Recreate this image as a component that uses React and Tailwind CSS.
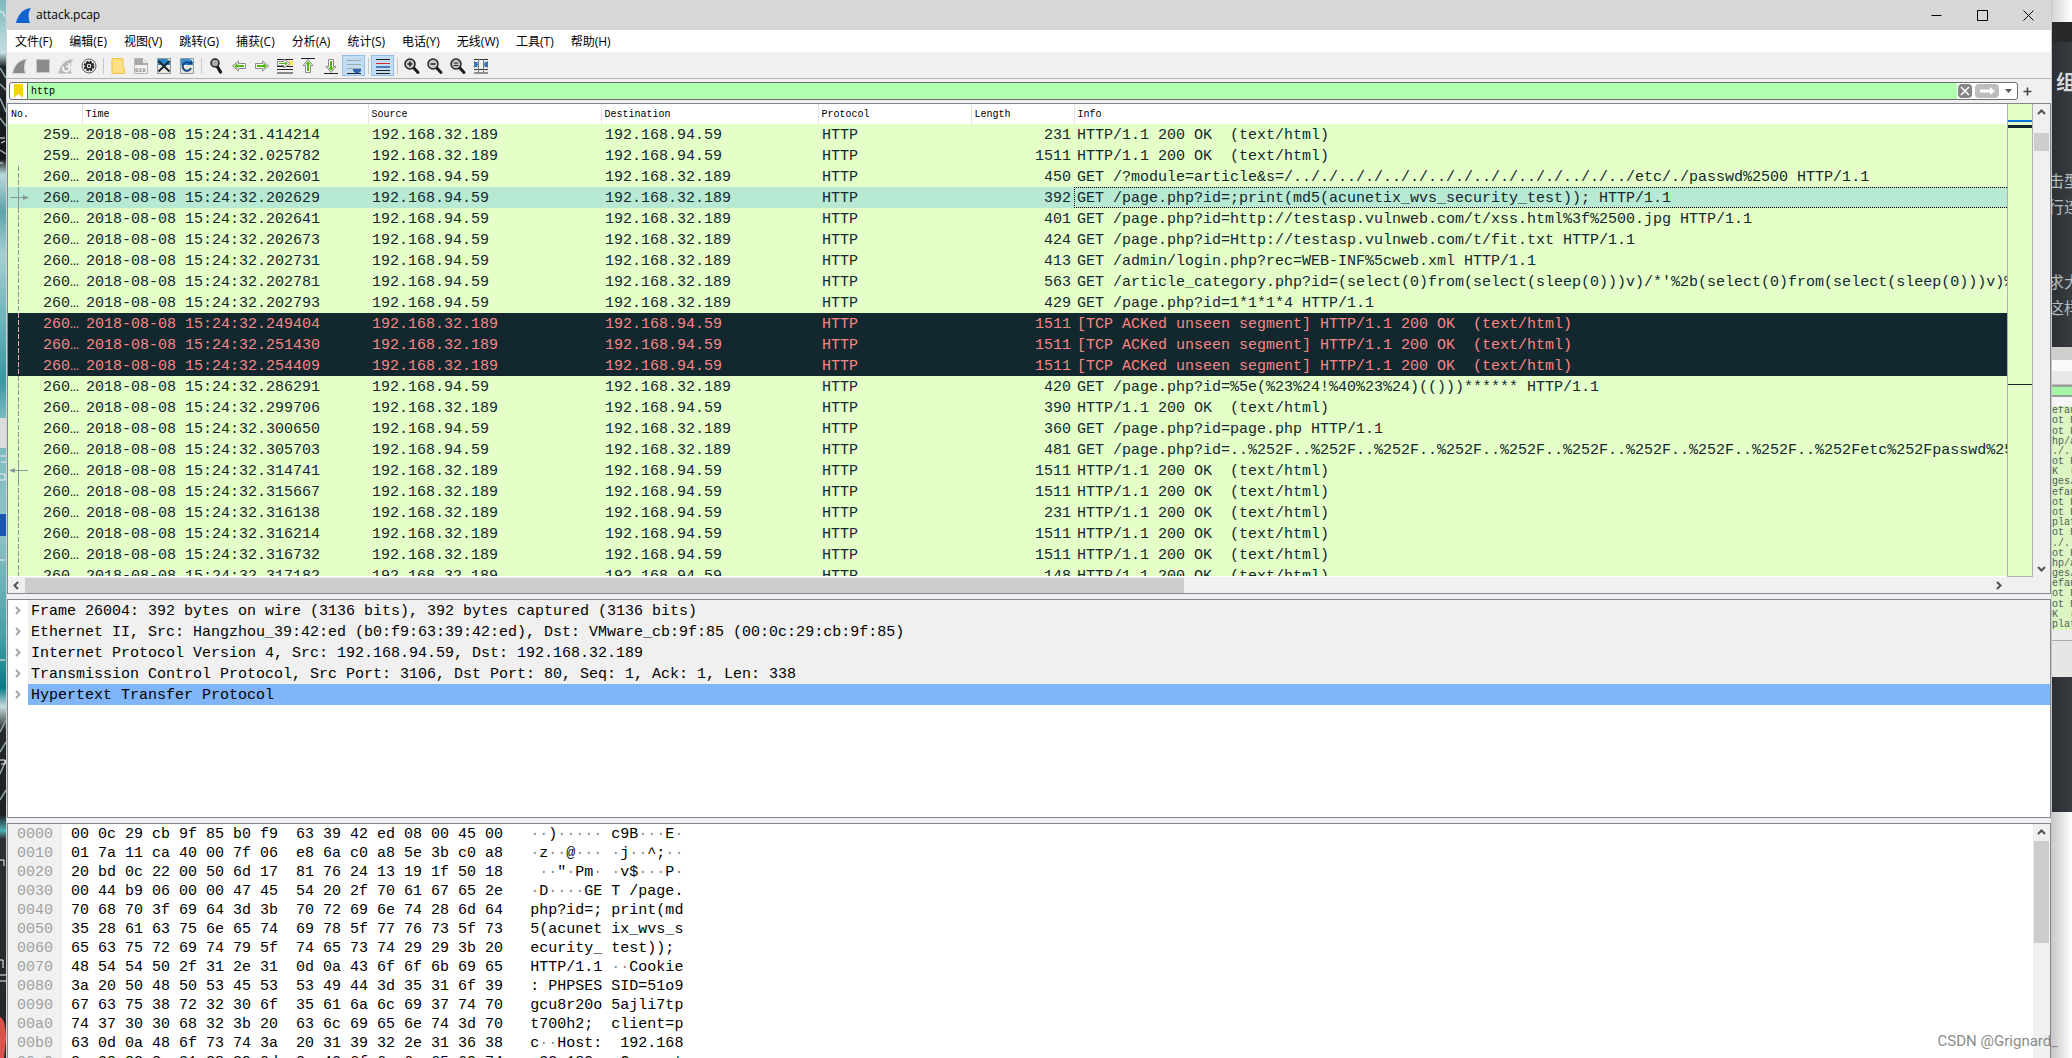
import React from 'react';

const menus = ['文件(F)', '编辑(E)', '视图(V)', '跳转(G)', '捕获(C)', '分析(A)', '统计(S)', '电话(Y)', '无线(W)', '工具(T)', '帮助(H)'];

const OK = 'HTTP/1.1 200 OK  (text/html)';
const UNSEEN = '[TCP ACKed unseen segment] HTTP/1.1 200 OK  (text/html)';
const A = '192.168.94.59';
const B = '192.168.32.189';

// no, time, source, destination, length, info, mark
const packets = [
    ['259…', '31.414214', B, A, 231, OK, null],
    ['259…', '32.025782', B, A, 1511, OK, null],
    ['260…', '32.202601', A, B, 450, 'GET /?module=article&s=/.././.././.././.././.././.././.././../etc/./passwd%2500 HTTP/1.1', 'dash'],
    ['260…', '32.202629', A, B, 392, 'GET /page.php?id=;print(md5(acunetix_wvs_security_test)); HTTP/1.1', 'request'],
    ['260…', '32.202641', A, B, 401, 'GET /page.php?id=http://testasp.vulnweb.com/t/xss.html%3f%2500.jpg HTTP/1.1', 'dash'],
    ['260…', '32.202673', A, B, 424, 'GET /page.php?id=Http://testasp.vulnweb.com/t/fit.txt HTTP/1.1', 'dash'],
    ['260…', '32.202731', A, B, 413, 'GET /admin/login.php?rec=WEB-INF%5cweb.xml HTTP/1.1', 'dash'],
    ['260…', '32.202781', A, B, 563, "GET /article_category.php?id=(select(0)from(select(sleep(0)))v)/*'%2b(select(0)from(select(sleep(0)))v)%", 'dash'],
    ['260…', '32.202793', A, B, 429, 'GET /page.php?id=1*1*1*4 HTTP/1.1', 'dash'],
    ['260…', '32.249404', B, A, 1511, UNSEEN, 'bad'],
    ['260…', '32.251430', B, A, 1511, UNSEEN, 'bad'],
    ['260…', '32.254409', B, A, 1511, UNSEEN, 'bad'],
    ['260…', '32.286291', A, B, 420, 'GET /page.php?id=%5e(%23%24!%40%23%24)(()))****** HTTP/1.1', 'dash'],
    ['260…', '32.299706', B, A, 390, OK, 'dash'],
    ['260…', '32.300650', A, B, 360, 'GET /page.php?id=page.php HTTP/1.1', 'dash'],
    ['260…', '32.305703', A, B, 481, 'GET /page.php?id=..%252F..%252F..%252F..%252F..%252F..%252F..%252F..%252F..%252F..%252Fetc%252Fpasswd%25', 'dash'],
    ['260…', '32.314741', B, A, 1511, OK, 'response'],
    ['260…', '32.315667', B, A, 1511, OK, 'dash'],
    ['260…', '32.316138', B, A, 231, OK, 'dash'],
    ['260…', '32.316214', B, A, 1511, OK, 'dash'],
    ['260…', '32.316732', B, A, 1511, OK, 'dash'],
    ['260…', '32.317182', B, A, 148, OK, 'dash'],
];

const details = [
    'Frame 26004: 392 bytes on wire (3136 bits), 392 bytes captured (3136 bits)',
    'Ethernet II, Src: Hangzhou_39:42:ed (b0:f9:63:39:42:ed), Dst: VMware_cb:9f:85 (00:0c:29:cb:9f:85)',
    'Internet Protocol Version 4, Src: 192.168.94.59, Dst: 192.168.32.189',
    'Transmission Control Protocol, Src Port: 3106, Dst Port: 80, Seq: 1, Ack: 1, Len: 338',
    'Hypertext Transfer Protocol',
];

const dump = [
    '00 0c 29 cb 9f 85 b0 f9 63 39 42 ed 08 00 45 00',
    '01 7a 11 ca 40 00 7f 06 e8 6a c0 a8 5e 3b c0 a8',
    '20 bd 0c 22 00 50 6d 17 81 76 24 13 19 1f 50 18',
    '00 44 b9 06 00 00 47 45 54 20 2f 70 61 67 65 2e',
    '70 68 70 3f 69 64 3d 3b 70 72 69 6e 74 28 6d 64',
    '35 28 61 63 75 6e 65 74 69 78 5f 77 76 73 5f 73',
    '65 63 75 72 69 74 79 5f 74 65 73 74 29 29 3b 20',
    '48 54 54 50 2f 31 2e 31 0d 0a 43 6f 6f 6b 69 65',
    '3a 20 50 48 50 53 45 53 53 49 44 3d 35 31 6f 39',
    '67 63 75 38 72 32 30 6f 35 61 6a 6c 69 37 74 70',
    '74 37 30 30 68 32 3b 20 63 6c 69 65 6e 74 3d 70',
    '63 0d 0a 48 6f 73 74 3a 20 31 39 32 2e 31 36 38',
    '2e 33 32 2e 31 38 39 0d 0a 43 6f 6e 6e 65 63 74',
];

const behind = ['efau', 'ot F', 'ot F', 'hp/a', './..', 'ot F', 'K  (', 'ges/', 'efau', 'ot F', 'ot F', 'plat', 'ot F', './..', 'ot F', 'hp/a', 'ges/', 'efau', 'ot F', 'ot F', 'K  (', 'plat'];

const Fin = ({ color }) => (
    <svg width="17" height="17" viewBox="0 0 17 17">
        <path d="M1 16C3 8 7 2 16 1C13 5 13 11 15 16Z" fill={color} />
    </svg>
);

const Arrow = ({ rotate = 0 }) => (
    <g transform={`rotate(${rotate} 9 9)`}>
        <path d="M2.500 6.500H9.500V4L15.500 9L9.500 14V11.500H2.500Z" fill="#fff" stroke="#8a8a8a" />
        <path d="M4 8H10.500V6L14 9L10.500 12V10H4Z" fill="#55b512" />
    </g>
);

const Lens = ({ children }) => (
    <>
        <path d="M10 10L15 15.500" stroke="#1c1c1c" strokeWidth="3" strokeLinecap="round" />
        <circle cx="7" cy="7" r="5" fill="#c9c9c9" stroke="#222" strokeWidth="1.500" />
        {children}
    </>
);

const tools = [
    { name: 'Start', art: <path d="M1.500 16.500C3 9 7 3 16 2C13 6 13 12 14.500 16.500Z" fill="#8a8a8a" stroke="#d5d5d5" /> },
    { name: 'Stop', art: <path d="M2.500 2.500h13v13h-13z" fill="#8c8c8c" stroke="#c8c8c8" /> },
    {
        name: 'Restart',
        art: (
            <>
                <path d="M1.500 16.500C3 9 7 3 16 2C13 6 13 12 14.500 16.500Z" fill="#b5b5b5" stroke="#d5d5d5" />
                <path d="M6.500 9.500A3.200 3.200 0 1 0 11.500 9M12 6V9.500H9" fill="none" stroke="#f7f7f7" strokeWidth="1.700" />
            </>
        ),
    },
    {
        name: 'Options',
        art: (
            <>
                <circle cx="9" cy="9" r="7" fill="#f4f4f4" stroke="#555" />
                <circle cx="9" cy="9" r="4.200" fill="none" stroke="#2b2b2b" strokeWidth="2.400" strokeDasharray="2.200 1.100" />
                <circle cx="9" cy="9" r="3.200" fill="none" stroke="#2b2b2b" strokeWidth="1.800" />
                <circle cx="9" cy="9" r="1.200" fill="#333" />
            </>
        ),
    },
    null,
    { name: 'Open', art: <path d="M3 1.500H14V11H15.500V16.500H3Z" fill="#ffdf82" stroke="#efc14b" /> },
    {
        name: 'Save',
        art: (
            <>
                <path d="M2.500 1.500H11L15.500 6V16.500H2.500Z" fill="#f5f5f5" stroke="#b4b4b4" />
                <path d="M3 2H11V6H15V8H3Z" fill="#a8a8a8" />
                <path d="M11 2V6H15" fill="#eee" />
                <text x="3" y="15" fontSize="6" fontFamily="Liberation Mono" fontWeight="bold" fill="#888">010</text>
            </>
        ),
    },
    {
        name: 'Close',
        art: (
            <>
                <path d="M2.500 1.500H15.500V16.500H2.500Z" fill="#e9e7d9" stroke="#8b9aa5" />
                <path d="M3 2H12L15 5V8H3Z" fill="#2a87c8" />
                <path d="M3.500 4L14.500 14.500M14.500 4L3.500 14.500" stroke="#16262f" strokeWidth="2" />
            </>
        ),
    },
    {
        name: 'Reload',
        art: (
            <>
                <path d="M2.500 1.500H15.500V16.500H2.500Z" fill="#e9e7d9" stroke="#8b9aa5" />
                <path d="M3 2H12L15 5V8H3Z" fill="#3191d0" />
                <path d="M12.500 7A4.300 4.300 0 1 0 13 11" fill="none" stroke="#15468c" strokeWidth="2" />
                <path d="M9 7.500H14V3Z" fill="#15468c" />
            </>
        ),
    },
    null,
    {
        name: 'Find',
        art: (
            <>
                <path d="M10 9L13.500 15" stroke="#151515" strokeWidth="3.200" strokeLinecap="round" />
                <circle cx="8" cy="6" r="4" fill="#aaa" stroke="#222" strokeWidth="1.500" />
            </>
        ),
    },
    { name: 'Back', art: <Arrow rotate={180} /> },
    { name: 'Forward', art: <Arrow /> },
    {
        name: 'Go to packet',
        art: (
            <>
                <path d="M1 2.500H17M1 9.500H17M1 12.500H17M1 16H17" stroke="#222" />
                <path d="M13 4H17V8H13Z" fill="#fbe94e" />
                <path d="M1.500 4.500H8V2L14 6.500L8 11V8.500H1.500Z" fill="#fff" stroke="#8a8a8a" />
                <path d="M3 6H9V4.500L12 6.500L9 8.500V7H3Z" fill="#55b512" />
            </>
        ),
    },
    { name: 'First packet', art: <><path d="M2 1.500H16" stroke="#222" /><Arrow rotate={-90} /></> },
    { name: 'Last packet', art: <><path d="M2 16.500H16" stroke="#222" /><Arrow rotate={90} /></> },
    {
        name: 'Auto scroll',
        active: true,
        art: (
            <>
                <path d="M2 3.500H16M2 7.500H16M2 11.500H16" stroke="#a0a8ae" />
                <path d="M2 16.500H16" stroke="#222" />
                <path d="M8 12H16V14L13 16.500H11L8 14Z" fill="#2d62b3" />
            </>
        ),
    },
    null,
    {
        name: 'Colorize',
        active: true,
        art: (
            <>
                <path d="M2 2.500H16M2 13.500H16M2 16.500H16" stroke="#222" />
                <path d="M2 6.500H16" stroke="#d8282f" />
                <path d="M2 10H16" stroke="#2a5cad" strokeWidth="1.500" />
            </>
        ),
    },
    null,
    { name: 'Zoom in', art: <Lens><path d="M4.500 7H9.500M7 4.500V9.500" stroke="#222" strokeWidth="1.500" /></Lens> },
    { name: 'Zoom out', art: <Lens><path d="M4.500 7H9.500" stroke="#222" strokeWidth="1.500" /></Lens> },
    { name: 'Normal size', art: <Lens><path d="M4.500 6H9.500M4.500 8.500H9.500" stroke="#222" /></Lens> },
    {
        name: 'Resize columns',
        art: (
            <>
                <path d="M2 2.500H16M2 12.500H16M2 16H16" stroke="#333" />
                <path d="M6.500 2V16M11.500 2V16" stroke="#777" />
                <path d="M2 4V11L6 7.500ZM16 4V11L12 7.500Z" fill="#1d5ca8" />
                <path d="M2 5H5.500V10H2ZM12.500 5H16V10H12.500Z" fill="#3a73b5" />
            </>
        ),
    },
];

const Chevron = ({ rotate = 0, color = '#505050' }) => (
    <svg width="9" height="9" viewBox="0 0 9 9">
        <path d="M1 6L4.500 2.500L8 6" fill="none" stroke={color} strokeWidth="2" transform={`rotate(${rotate} 4.500 4.500)`} />
    </svg>
);

// Conversation line drawn in front of the packet number
const Track = ({ mark }) => {
    const color = mark === 'bad' ? '#f4a6a6' : '#8a979c';
    const solid = mark === 'request' || mark === 'response';
    return (
        <svg width="24" height="21" viewBox="0 0 24 21" className="shrink-0">
            {mark && <path d="M10.500 0V21" stroke={color} strokeDasharray={solid ? undefined : '5 2'} />}
            {mark === 'request' && <path d="M2 10.500H15" stroke={color} />}
            {mark === 'request' && <path d="M15 8L21 10.500L15 13Z" fill={color} />}
            {mark === 'response' && <path d="M7 10.500H20" stroke={color} />}
            {mark === 'response' && <path d="M7 8L1 10.500L7 13Z" fill={color} />}
        </svg>
    );
};

const Desktop = () => (
    <svg className="h-full w-[6px] shrink-0" viewBox="0 0 6 1058" preserveAspectRatio="none">
        <defs>
            <linearGradient id="sea" x1="0" y1="0" x2="0" y2="1">
                <stop offset="0" stopColor="#7fb9bd" />
                <stop offset="0.050" stopColor="#c3dfe0" />
                <stop offset="0.063" stopColor="#20272b" />
                <stop offset="0.150" stopColor="#15191d" />
                <stop offset="0.165" stopColor="#b9d9db" />
                <stop offset="0.200" stopColor="#5da3ab" />
                <stop offset="0.240" stopColor="#a5cfd2" />
                <stop offset="0.300" stopColor="#6fb5bd" />
                <stop offset="0.360" stopColor="#3a97a3" />
                <stop offset="0.394" stopColor="#77b9c0" />
                <stop offset="0.500" stopColor="#8ec3c7" />
                <stop offset="0.600" stopColor="#4aa0a8" />
                <stop offset="0.650" stopColor="#087a85" />
                <stop offset="0.668" stopColor="#c5dcdc" />
                <stop offset="0.690" stopColor="#24292c" />
                <stop offset="0.770" stopColor="#1d2022" />
                <stop offset="0.785" stopColor="#4bb0b5" />
                <stop offset="0.793" stopColor="#2c3032" />
                <stop offset="1" stopColor="#232629" />
            </linearGradient>
        </defs>
        <path d="M0 0H6V1058H0Z" fill="url(#sea)" />
        <path d="M0 68L6 78M0 84L6 90M0 98L6 112M0 118L6 126M0 150L6 154" stroke="#93a7ab" strokeWidth="1.500" />
        <path d="M0 732L6 720M0 752L6 742M0 774L6 760M0 800L6 790" stroke="#8fa3a5" strokeWidth="1.500" />
        <path d="M0 418H6V448H0Z" fill="#dcdcdc" />
        <path d="M0 514H6V536H0Z" fill="#1d56b0" />
        <path d="M0 1017Q6 1020 6 1040L4 1058H0Z" fill="#d9534a" />
        <path d="M0 12L3 12L5 17M0 138H5M1 143L5 141M0 163H3M0 456H6M1 462H6M0 474H5V480H0M0 560H5M0 660H5M0 760H5V764H1M0 860H4V866M0 960H3V968M0 975H6M0 981H6" fill="none" stroke="#f4f4f4" />
    </svg>
);

const Backdrop = () => (
    <div className="flex w-5 shrink-0 flex-col overflow-hidden bg-white text-[#b6bcc0]">
        <div className="h-[22px] shrink-0 bg-linear-to-r from-[#d5d5d5] to-white" />
        <div className="h-5 shrink-0 bg-[#27292b]" />
        <div className="flex h-[305px] shrink-0 flex-col items-end overflow-hidden whitespace-nowrap bg-linear-to-r from-[#2c3034] to-[#373c40] pt-6">
            <p className="h-8 w-4 text-xl font-bold leading-8 text-[#d8dadb]">组</p>
            <p className="mt-[69px] h-[26px] w-6 text-base leading-[26px]">击型</p>
            <p className="h-[26px] w-6 text-base leading-[26px]">行连</p>
            <p className="mt-[49px] h-[26px] w-6 text-base leading-[26px]">求大</p>
            <p className="h-[26px] w-6 text-base leading-[26px]">这样</p>
        </div>
        <div className="h-[13px] shrink-0 bg-[#cfcfcf]" />
        <div className="h-[11px] shrink-0 bg-[#fafafa]" />
        <div className="h-[14px] shrink-0 border-b border-[#bbb] bg-[#e8e8e8]" />
        <div className="h-[12px] shrink-0 border-y-2 border-[#9aa09a] bg-[#a5f7a5]" />
        <div className="h-[9px] shrink-0 bg-[#f6f6f6]" />
        <div className="grid h-[224px] shrink-0 auto-rows-fr items-end overflow-hidden whitespace-pre bg-[#dcf5c3] font-['Liberation_Mono'] text-[10px] leading-[10px] text-[#4e5f58]">
            {behind.map((line, i) => (
                <span key={i}>{line}</span>
            ))}
        </div>
        <div className="h-[11px] shrink-0 border-b border-[#aaa] bg-[#ececec]" />
        <div className="h-9 shrink-0 bg-[#e6e6e6]" />
        <div className="h-[135px] shrink-0 bg-linear-to-r from-[#2c3034] to-[#373c40]" />
        <div className="flex-1 bg-linear-to-r from-[#c9c9c9] to-white" />
    </div>
);

const TitleBar = () => (
    <header className="flex h-[30px] shrink-0 items-center bg-[#d7d7d7] pl-[9px]">
        <Fin color="#1263d2" />
        <h1 className="ml-1 flex-1 font-['Open_Sans'] text-[12px] leading-4">attack.pcap</h1>
        {['M0.500 5.500H10.500', 'M0.500 0.500H10.500V10.500H0.500Z', 'M0.500 0.500L10.500 10.500M10.500 0.500L0.500 10.500'].map((d, i) => (
            <button key={d} aria-label={['Minimize', 'Maximize', 'Close'][i]} className="flex h-[28px] w-[46px] items-center justify-center">
                <svg width="11" height="11" viewBox="0 0 11 11">
                    <path d={d} fill="none" stroke="#000" />
                </svg>
            </button>
        ))}
    </header>
);

const FilterBar = () => (
    <div className="flex h-[24px] shrink-0 items-center gap-1 bg-[#f0f0f0] pl-[2px] pr-[18px]">
        <div className="flex h-[18px] flex-1 items-stretch overflow-hidden rounded-[3px] border border-[#6e6e6e] bg-white">
            <button aria-label="Bookmark" className="flex w-[18px] items-center justify-center border-r border-[#6e6e6e]">
                <svg width="9" height="14" viewBox="0 0 9 14">
                    <path d="M0 0H9V14L4.500 10L0 14Z" fill="#f2d500" />
                </svg>
            </button>
            <input aria-label="Display filter" defaultValue="http" className="min-w-0 flex-1 bg-[#afffaf] px-[3px] font-['Liberation_Mono'] text-[10px] text-black outline-none" />
            <button aria-label="Clear" className="m-px flex w-[14px] items-center justify-center rounded-sm bg-[#858585]">
                <svg width="10" height="10" viewBox="0 0 10 10">
                    <path d="M1 1L9 9M9 1L1 9" stroke="#fff" strokeWidth="1.500" />
                </svg>
            </button>
            <button aria-label="Apply" className="m-px ml-[2px] flex w-6 items-center justify-center rounded-sm bg-[#bdbdbd]">
                <svg width="17" height="8" viewBox="0 0 17 8">
                    <path d="M1 2.500H11V0L16 4L11 8V5.500H1Z" fill="#fff" />
                </svg>
            </button>
            <button aria-label="Recent filters" className="flex w-[17px] items-center justify-center">
                <svg width="7" height="4" viewBox="0 0 7 4">
                    <path d="M0 0H7L3.500 4Z" fill="#555" />
                </svg>
            </button>
        </div>
        <button aria-label="Add filter button" className="flex w-[11px] shrink-0 justify-center">
            <svg width="9" height="9" viewBox="0 0 9 9">
                <path d="M0.500 4.500H8.500M4.500 0.500V8.500" stroke="#444" strokeWidth="1.600" />
            </svg>
        </button>
    </div>
);

const PacketRow = ({ packet }) => {
    const [no, time, source, destination, length, info, mark] = packet;
    let tone = 'bg-[#e4ffc7] text-[#12272e]';
    if (mark === 'bad') tone = 'bg-[#12272e] text-[#f78787]';
    if (mark === 'request') tone = 'bg-[#b7e9d3] text-[#12272e]';
    return (
        <tr className={`h-[21px] ${tone}`}>
            <td className="p-0">
                <div className="flex h-[21px] justify-between pr-[3px]">
                    <Track mark={mark} />
                    <span className="pt-[2px]">{no}</span>
                </div>
            </td>
            <td className="pb-0 pl-1 pt-[2px]">2018-08-08 15:24:{time}</td>
            <td className="pb-0 pl-1 pt-[2px]">{source}</td>
            <td className="pb-0 pl-1 pt-[2px]">{destination}</td>
            <td className="pb-0 pl-1 pt-[2px]">HTTP</td>
            <td className="pb-0 pr-[3px] pt-[2px] text-right">{length}</td>
            <td className="overflow-hidden p-0">
                <div className={mark === 'request' ? 'h-[21px] border border-r-0 border-dotted border-black pl-[2px] pt-px' : 'h-[21px] pl-[3px] pt-[2px]'}>{info}</div>
            </td>
        </tr>
    );
};

const PacketList = () => (
    <section className="flex min-h-0 flex-col overflow-hidden border border-[#828790] bg-[#f0f0f0]">
        <div className="flex min-h-0 flex-1">
            <div className="min-w-0 flex-1 overflow-hidden border-b border-white bg-white">
                <table className="w-full table-fixed border-collapse whitespace-pre text-[15px] leading-[19px]">
                    <colgroup>
                        <col className="w-[74px]" />
                        <col className="w-[286px]" />
                        <col className="w-[233px]" />
                        <col className="w-[217px]" />
                        <col className="w-[153px]" />
                        <col className="w-[103px]" />
                        <col />
                    </colgroup>
                    <thead>
                        <tr className="h-5 bg-white text-left text-[10px] leading-[18px] text-black">
                            {['No.', 'Time', 'Source', 'Destination', 'Protocol', 'Length', 'Info'].map((name) => (
                                <th key={name} scope="col" className="border-r border-[#e2e2e2] pb-0 pl-[3px] pt-[2px] font-normal last:border-r-0">{name}</th>
                            ))}
                        </tr>
                    </thead>
                    <tbody>
                        {packets.map((packet, i) => (
                            <PacketRow key={i} packet={packet} />
                        ))}
                    </tbody>
                </table>
            </div>
            {/* Intelligent scroll bar */}
            <div className="flex w-[26px] shrink-0 flex-col border border-t-0 border-[#b0b0b0] bg-[#e4ffc7] pt-4">
                <div className="h-[2px] shrink-0 bg-[#0078d7]" />
                <div className="mt-[3px] h-[3px] shrink-0 bg-[#12272e]" />
                <div className="mt-[256px] h-px shrink-0 bg-[#12272e]" />
            </div>
            <div className="flex w-[17px] shrink-0 flex-col items-center justify-between pb-1 pt-1">
                <div className="flex w-full flex-col items-center gap-4">
                    <Chevron />
                    <div className="h-[18px] w-[15px] bg-[#cdcdcd]" />
                </div>
                <Chevron rotate={180} />
            </div>
        </div>
        <div className="flex h-4 shrink-0 items-center pr-[43px]">
            <span className="flex w-[17px] justify-center"><Chevron rotate={-90} /></span>
            <div className="flex h-[15px] flex-1">
                <div className="w-[59%] bg-[#cdcdcd]" />
            </div>
            <span className="flex w-[17px] justify-center"><Chevron rotate={90} /></span>
        </div>
    </section>
);

const PacketDetails = () => (
    <section className="min-h-0 overflow-hidden border border-[#828790] bg-white">
        <ul className="text-[15px] leading-[19px] text-black">
            {details.map((line, i) => (
                <li key={line} className="flex h-[21px]">
                    <button aria-label="Expand" className="flex w-5 shrink-0 items-center justify-center pr-[2px]">
                        <Chevron rotate={90} color="#a6a6a6" />
                    </button>
                    <span className={`flex-1 whitespace-pre pl-[3px] pt-[2px] ${i === 4 ? 'bg-[#80b5f7]' : 'bg-[#f0f0f0]'}`}>{line}</span>
                </li>
            ))}
        </ul>
    </section>
);

const toAscii = (bytes) =>
    bytes.map((byte, i) => {
        const code = parseInt(byte, 16);
        const printable = code >= 32 && code < 127;
        return (
            <React.Fragment key={i}>
                {i === 8 && ' '}
                {printable ? String.fromCharCode(code) : <span className="text-[#8c8c8c]">·</span>}
            </React.Fragment>
        );
    });

const PacketBytes = () => (
    <section className="flex min-h-0 overflow-hidden border border-b-0 border-[#828790] bg-white">
        <div className="min-w-0 flex-1 overflow-hidden">
            <table className="whitespace-pre text-[15px] leading-[17px] text-black">
                <tbody>
                    {dump.map((line, i) => {
                        const bytes = line.split(' ');
                        return (
                            <tr key={i} className="h-[19px]">
                                <th scope="row" className="w-[54px] bg-[#f0f0f0] px-[9px] pb-0 pt-[2px] text-left font-normal text-[#a0a0a0]">
                                    {(i * 16).toString(16).padStart(4, '0')}
                                </th>
                                <td className="pb-0 pl-[9px] pt-[2px]">{bytes.slice(0, 8).join(' ')}  {bytes.slice(8).join(' ')}</td>
                                <td className="pb-0 pl-[27px] pt-[2px]">{toAscii(bytes)}</td>
                            </tr>
                        );
                    })}
                </tbody>
            </table>
        </div>
        <div className="flex w-[17px] shrink-0 flex-col items-center gap-1 bg-[#f0f0f0] pt-1">
            <Chevron />
            <div className="h-[102px] w-[15px] bg-[#cdcdcd]" />
        </div>
    </section>
);

const App = () => (
    <div className="relative flex h-screen overflow-hidden font-['Noto_Sans_CJK_SC',sans-serif] text-black">
        <Desktop />
        <main className="flex min-w-0 flex-1 flex-col border-r border-[#c8c8c8] bg-[#f0f0f0]">
            <TitleBar />
            <div className="flex min-h-0 flex-1 flex-col border-l border-[#d0d0d0]">
                <nav className="flex h-[23px] shrink-0 items-center gap-[17px] border-b border-[#f0f0f0] bg-white pl-2 pt-[2px] font-['Open_Sans','Noto_Sans_CJK_SC',sans-serif] text-[12px] leading-4">
                    {menus.map((menu) => (
                        <button key={menu} className="whitespace-nowrap">{menu}</button>
                    ))}
                </nav>
                <div className="flex h-[26px] shrink-0 items-center border-b border-[#b4b4b4] pl-px">
                    {tools.map((tool, i) =>
                        tool ? (
                            <button key={i} aria-label={tool.name} className={`flex h-[21px] w-[23px] items-center justify-center ${tool.active ? 'border border-[#90c1ea] bg-[#c1dcf3]' : ''}`}>
                                <svg width="18" height="18" viewBox="0 0 18 18" className="shrink-0">{tool.art}</svg>
                            </button>
                        ) : (
                            <span key={i} className="flex w-[6px] justify-center"><i className="h-4 w-px bg-[#c8c8c8]" /></span>
                        )
                    )}
                </div>
                <FilterBar />
                <div className="grid min-h-0 flex-1 grid-rows-[minmax(0,491fr)_minmax(0,219fr)_minmax(0,235fr)] gap-[5px] font-['Liberation_Mono',monospace]">
                    <PacketList />
                    <PacketDetails />
                    <PacketBytes />
                </div>
            </div>
        </main>
        <Backdrop />
        <p className="absolute bottom-[7px] right-[14px] font-['Roboto'] text-[15px] leading-5 text-[#8c8c8c]">CSDN @Grignard_</p>
    </div>
);

export default App;
